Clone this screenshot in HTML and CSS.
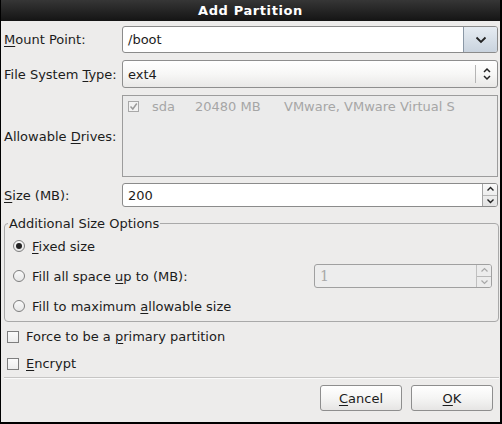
FILE: index.html
```html
<!DOCTYPE html>
<html>
<head>
<meta charset="utf-8">
<link rel="stylesheet" href="styles.css">
</head>
<body>
<div class="window">
  <div class="titlebar">Add Partition</div>
  <div class="content">
    <div class="form">
      <div class="row r1">
        <div class="label"><u>M</u>ount Point:</div>
        <div class="combo-entry">
          <div class="entry-text">/boot</div>
          <div class="combo-btn">
            <svg width="12" height="8" viewBox="0 0 12 8"><path d="M1.5 1.5 L6 6 L10.5 1.5" fill="none" stroke="#222" stroke-width="1.8"/></svg>
          </div>
        </div>
      </div>
      <div class="row r2">
        <div class="label">File System <u>T</u>ype:</div>
        <div class="combo-button">
          <div class="entry-text">ext4</div>
          <div class="combo-sep"></div>
          <div class="combo-arrows">
            <svg width="10" height="14" viewBox="0 0 10 14"><path d="M2 5 L5 2 L8 5 M2 9 L5 12 L8 9" fill="none" stroke="#222" stroke-width="1.5"/></svg>
          </div>
        </div>
      </div>
      <div class="row r3">
        <div class="label">Allowable <u>D</u>rives:</div>
        <div class="drives">
          <div class="drive">
            <span class="dcheck"><svg width="9" height="9" viewBox="0 0 9 9"><path d="M1.5 4.5 L3.8 7 L7.8 1.5" fill="none" stroke="#9a9a9a" stroke-width="1.5"/></svg></span>
            <span class="dname">sda</span>
            <span class="dsize">20480 MB</span>
            <span class="dmodel">VMware, VMware Virtual S</span>
          </div>
        </div>
      </div>
      <div class="row r4">
        <div class="label"><u>S</u>ize (MB):</div>
        <div class="spin">
          <div class="entry-text">200</div>
          <div class="spin-btns">
            <div class="sb"><svg width="9" height="6" viewBox="0 0 9 6"><path d="M1.5 4.5 L4.5 1.5 L7.5 4.5" fill="none" stroke="#222" stroke-width="1.4"/></svg></div>
            <div class="sb"><svg width="9" height="6" viewBox="0 0 9 6"><path d="M1.5 1.5 L4.5 4.5 L7.5 1.5" fill="none" stroke="#222" stroke-width="1.4"/></svg></div>
          </div>
        </div>
      </div>
    </div>

    <fieldset class="frame">
      <legend>Additional Size Options</legend>
      <div class="opt">
        <span class="radio on"><span class="dot"></span></span>
        <span><u>F</u>ixed size</span>
      </div>
      <div class="opt">
        <span class="radio"></span>
        <span>Fill all space <u>u</u>p to (MB):</span>
        <div class="spin disabled">
          <div class="entry-text mono">1</div>
          <div class="spin-btns">
            <div class="sb"><svg width="9" height="6" viewBox="0 0 9 6"><path d="M1.5 4.5 L4.5 1.5 L7.5 4.5" fill="none" stroke="#a8a8a8" stroke-width="1.2"/></svg></div>
            <div class="sb"><svg width="9" height="6" viewBox="0 0 9 6"><path d="M1.5 1.5 L4.5 4.5 L7.5 1.5" fill="none" stroke="#a8a8a8" stroke-width="1.2"/></svg></div>
          </div>
        </div>
      </div>
      <div class="opt">
        <span class="radio"></span>
        <span>Fill to maximum <u>a</u>llowable size</span>
      </div>
    </fieldset>

    <div class="checks">
      <div class="chk"><span class="box"></span><span>Force to be a <u>p</u>rimary partition</span></div>
      <div class="chk"><span class="box"></span><span><u>E</u>ncrypt</span></div>
    </div>

    <div class="sep"></div>

    <div class="buttons">
      <div class="btn"><u>C</u>ancel</div>
      <div class="btn"><u>O</u>K</div>
    </div>
  </div>
</div>
</body>
</html>
```

FILE: styles.css
```css
* { box-sizing: border-box; }
html, body { margin: 0; padding: 0; }
body {
  width: 502px;
  height: 424px;
  overflow: hidden;
  font-family: "DejaVu Sans", sans-serif;
  font-size: 13px;
  color: #1c1c1c;
}
u { text-decoration: underline; text-underline-offset: 2px; text-decoration-thickness: 1px; }

.window {
  width: 502px;
  height: 424px;
  background: #edeceb;
  border-left: 1px solid #000;
  border-right: 2px solid #000;
  border-bottom: 2px solid #000;
  display: flex;
  flex-direction: column;
}
.titlebar {
  height: 21px;
  flex: none;
  background: linear-gradient(#363636, #141414);
  color: #fff;
  font-weight: bold;
  font-size: 13px;
  letter-spacing: 0.6px;
  display: flex;
  align-items: center;
  justify-content: center;
  padding-bottom: 1px;
}
.content {
  flex: 1;
  padding: 5px 2px 0 3px;
  display: flex;
  flex-direction: column;
}
.form { display: flex; flex-direction: column; }
.row { display: flex; align-items: center; }
.label { width: 118px; flex: none; }
.r1 { height: 27px; }
.r2 { height: 28px; margin-top: 7px; }
.r3 { height: 82px; margin-top: 7px; }
.r4 { height: 24px; margin-top: 6px; }

.entry-text { flex: 1; padding-left: 5px; }

.combo-entry {
  flex: 1;
  height: 100%;
  display: flex;
  align-items: center;
  background: #fff;
  border: 1px solid #8b8b8b;
  border-radius: 3px;
  overflow: hidden;
}
.combo-btn {
  width: 34px;
  height: 100%;
  flex: none;
  border-left: 1px solid #8b98a6;
  background: linear-gradient(#e6ecf2, #c9d3de);
  display: flex;
  align-items: center;
  justify-content: center;
}
.combo-button {
  flex: 1;
  height: 100%;
  display: flex;
  align-items: center;
  background: linear-gradient(#ffffff, #f7f7f6 50%, #e9e8e7);
  border: 1px solid #8e8e8e;
  border-radius: 3px;
}
.combo-sep {
  width: 1px;
  height: 18px;
  background: #b5b5b5;
  flex: none;
}
.combo-arrows {
  width: 21px;
  flex: none;
  display: flex;
  justify-content: center;
  align-items: center;
}

.drives {
  flex: 1;
  height: 100%;
  background: #ebebeb;
  border: 1px solid #9c9c9c;
  align-self: stretch;
}
.drive {
  display: flex;
  align-items: center;
  height: 20px;
  color: #a6a6a6;
}
.dcheck {
  width: 11px;
  height: 11px;
  border: 1px solid #a8a8a8;
  background: #f2f2f2;
  margin-left: 5px;
  display: flex;
  align-items: center;
  justify-content: center;
}
.dname { margin-left: 13px; width: 43px; }
.dsize { width: 89px; }

.spin {
  flex: 1;
  height: 100%;
  display: flex;
  align-items: center;
  background: #fff;
  border: 1px solid #8b8b8b;
  border-radius: 3px;
  overflow: hidden;
}
.spin-btns {
  width: 15px;
  height: 100%;
  flex: none;
  border-left: 1px solid #a5a5a5;
  display: flex;
  flex-direction: column;
  background: linear-gradient(#f9f9f9, #e3e3e3);
}
.sb {
  flex: 1;
  display: flex;
  align-items: center;
  justify-content: center;
}
.sb + .sb { border-top: 1px solid #b8b8b8; }

.frame {
  margin: 9px 0 0 0;
  width: 495px;
  padding: 0 0 0 8px;
  border: 1px solid #a9a9a9;
  border-radius: 4px;
  height: 106px;
}
.frame legend {
  padding: 0 1px;
  margin-left: -5px;
  line-height: 15px;
}
.opt {
  height: 30px;
  display: flex;
  align-items: center;
}
.radio {
  width: 12px;
  height: 12px;
  border: 1px solid #7e7e7e;
  border-radius: 50%;
  background: linear-gradient(#fafafa, #e6e6e6);
  margin-right: 7px;
  flex: none;
  display: flex;
  align-items: center;
  justify-content: center;
}
.radio .dot {
  width: 6px;
  height: 6px;
  border-radius: 50%;
  background: #222;
}
.opt .spin {
  flex: none;
  width: 178px;
  height: 24px;
  margin-left: auto;
  margin-right: 6px;
}
.spin.disabled {
  background: #ededed;
  border-color: #a0a0a0;
  color: #a8a8a8;
}
.spin.disabled .spin-btns {
  background: #ececec;
  border-left-color: #c0c0c0;
}
.mono { font-family: "DejaVu Serif", serif; font-size: 14px; }

.checks { margin-top: 1px; }
.chk {
  height: 27px;
  display: flex;
  align-items: center;
}
.box {
  width: 12px;
  height: 12px;
  border: 1px solid #7e7e7e;
  background: linear-gradient(#fbfbfb, #ededed);
  margin-left: 3px;
  margin-right: 7px;
  flex: none;
}
.sep {
  height: 2px;
  border-top: 1px solid #c6c5c4;
  border-bottom: 1px solid #fafafa;
  width: 495px;
}
.buttons {
  display: flex;
  justify-content: flex-end;
  gap: 9px;
  margin-top: 6px;
  padding-right: 5px;
}
.btn {
  width: 82px;
  height: 26px;
  display: flex;
  align-items: center;
  justify-content: center;
  border: 1px solid #8e8e8e;
  border-radius: 3px;
  background: linear-gradient(#ffffff, #f5f5f4 50%, #e6e5e4);
}
```
